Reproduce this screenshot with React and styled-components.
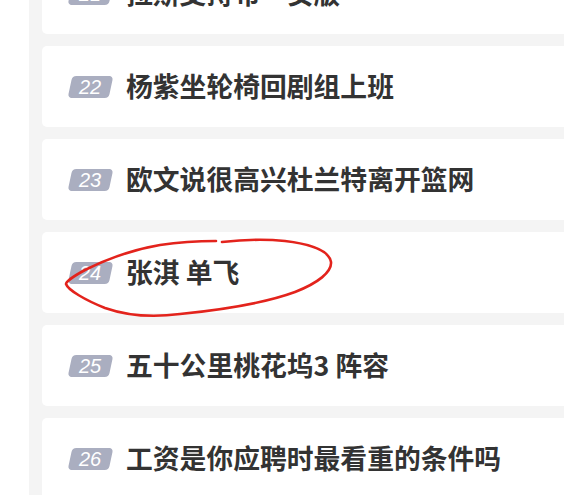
import React from "react";
import styled, { createGlobalStyle } from "styled-components";

const Global = createGlobalStyle`
  html, body { margin: 0; padding: 0; background: #ffffff; overflow: hidden; }
  body { font-family: "Noto Sans CJK SC", "Noto Sans", sans-serif; }
`;

const Page = styled.div`
  position: relative;
  width: 564px;
  height: 495px;
  overflow: hidden;
  background: #ffffff;
  padding-left: 29px;
  box-sizing: border-box;
`;

const Panel = styled.div`
  display: flow-root;
  background: #f4f4f4;
  height: 100%;
  padding: 0 0 0 13px;
  box-sizing: border-box;
`;

const List = styled.ul`
  list-style: none;
  margin: -47px -40px 0 0;
  padding: 0;
  display: flex;
  flex-direction: column;
  gap: 12px;
`;

const Card = styled.li`
  background: #ffffff;
  border-radius: 5px;
  height: 81px;
  display: flex;
  align-items: center;
  gap: 15px;
  padding: 0 0 0 26px;
  box-sizing: border-box;
`;

const Badge = styled.span`
  display: inline-flex;
  align-items: center;
  justify-content: center;
  width: 41px;
  height: 22px;
  margin-left: 2px;
  background: #aaaec0;
  border-radius: 4px;
  transform: skewX(-12deg);
  flex-shrink: 0;
`;

const Num = styled.span`
  transform: skewX(12deg);
  color: #ffffff;
  font-family: "Liberation Sans", "Noto Sans", sans-serif;
  font-style: italic;
  font-size: 20px;
  line-height: 1;
`;

const Title = styled.span`
  color: #333333;
  font-weight: 700;
  font-size: 26.8px;
  line-height: 1;
  white-space: nowrap;
`;

const Scribble = styled.svg`
  position: absolute;
  left: 0;
  top: 0;
  pointer-events: none;
`;

const items = [
  { n: 21, t: "拉斯支持布·安版" },
  { n: 22, t: "杨紫坐轮椅回剧组上班" },
  { n: 23, t: "欧文说很高兴杜兰特离开篮网" },
  { n: 24, t: "张淇 单飞" },
  { n: 25, t: "五十公里桃花坞3 阵容" },
  { n: 26, t: "工资是你应聘时最看重的条件吗" },
];

export default function App() {
  return (
    <>
      <Global />
      <Page>
        <Panel>
          <List>
            {items.map((it) => (
              <Card key={it.n}>
                <Badge>
                  <Num>{it.n}</Num>
                </Badge>
                <Title>{it.t}</Title>
              </Card>
            ))}
          </List>
        </Panel>
        <Scribble width="564" height="495" viewBox="0 0 564 495">
          <path
            d="M216 241 C200 241 180 242 160 245 C130 250 105 260 85 270 C72 277 66 282 66 284 C68 290 85 300 105 308 C125 315 150 318 180 314 C220 310 265 303 295 292 C318 283 332 272 331 262 C329 250 310 244 285 241 C265 239 240 240 222 242"
            fill="none"
            stroke="#e3231c"
            strokeWidth="2.6"
            strokeLinecap="round"
          />
        </Scribble>
      </Page>
    </>
  );
}
